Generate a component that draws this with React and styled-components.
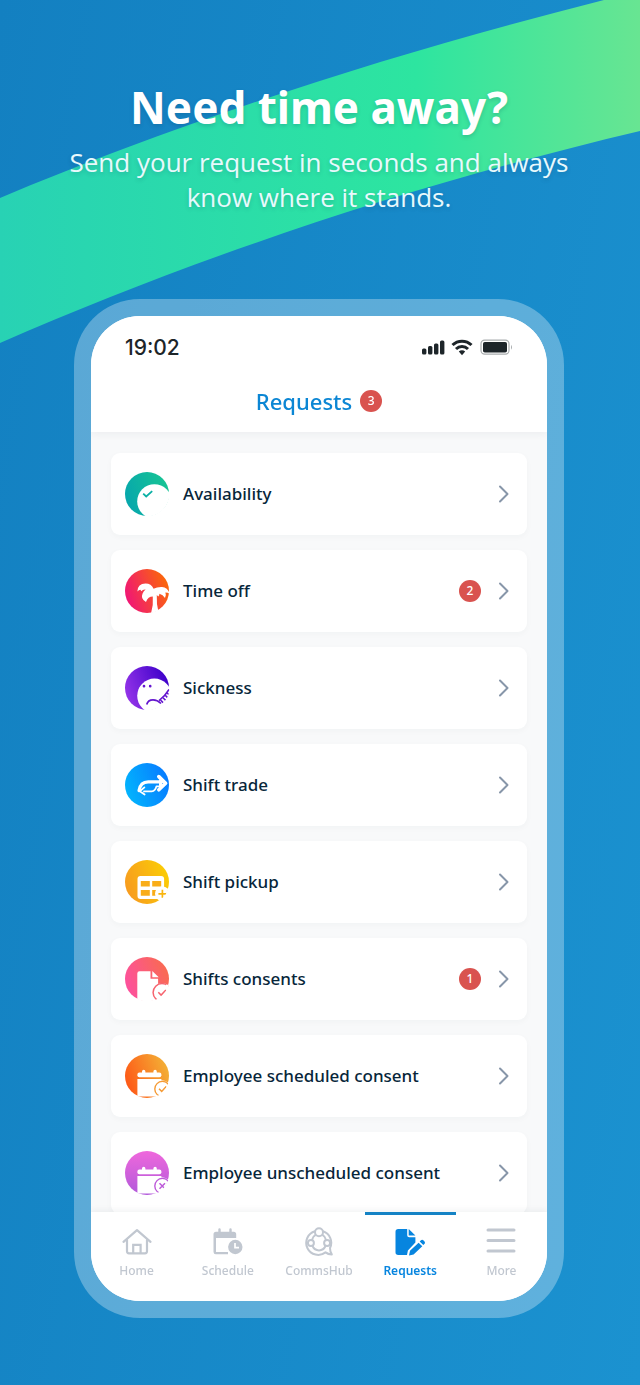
import styled, { createGlobalStyle, css } from "styled-components";

const requests = [
  { title: "Availability", Icon: AvailabilityIcon },
  { title: "Time off", Icon: TimeOffIcon, count: 2 },
  { title: "Sickness", Icon: SicknessIcon },
  { title: "Shift trade", Icon: TradeIcon },
  { title: "Shift pickup", Icon: PickupIcon },
  { title: "Shifts consents", Icon: ConsentsIcon, count: 1 },
  { title: "Employee scheduled consent", Icon: ScheduledIcon },
  { title: "Employee unscheduled consent", Icon: UnscheduledIcon },
];

const tabs = [
  { title: "Home", Icon: HomeIcon },
  { title: "Schedule", Icon: ScheduleIcon },
  { title: "CommsHub", Icon: CommsIcon },
  { title: "Requests", Icon: RequestsIcon, active: true },
  { title: "More", Icon: MoreIcon },
];

function App() {
  return (
    <Page>
      <GlobalStyle />
      <Ribbon viewBox="0 0 640 345" preserveAspectRatio="none" aria-hidden="true">
        <defs>
          <linearGradient id="ribbon" x1="0" x2="1">
            <stop offset="0" stopColor="#28d2b4" />
            <stop offset="0.65" stopColor="#2de5a0" />
            <stop offset="1" stopColor="#68e592" />
          </linearGradient>
        </defs>
        <path
          d="M0 198C180 122 390 54 604 0H640V131C400 188 190 260 0 343Z"
          fill="url(#ribbon)"
        />
      </Ribbon>

      <Intro>
        <Headline>Need time away?</Headline>
        <Tagline>Send your request in seconds and always know where it stands.</Tagline>
      </Intro>

      <Phone>
        <Screen>
          <StatusBar>
            <Clock>19:02</Clock>
            <StatusIcons />
          </StatusBar>
          <Header>
            <ScreenTitle>Requests</ScreenTitle>
            <Badge>3</Badge>
          </Header>
          <List>
            {requests.map(({ title, Icon, count }) => (
              <li key={title}>
                <Card type="button">
                  <Icon />
                  <CardTitle>{title}</CardTitle>
                  {count && <Badge>{count}</Badge>}
                  <Chevron />
                </Card>
              </li>
            ))}
          </List>
          <TabBar>
            {tabs.map(({ title, Icon, active }) => (
              <Tab key={title} href="#" $active={active}>
                <Icon />
                {title}
              </Tab>
            ))}
          </TabBar>
        </Screen>
      </Phone>
    </Page>
  );
}

function StatusIcons() {
  return (
    <svg width="92" height="18" viewBox="0 0 92 18" fill="#1d2529" aria-hidden="true">
      <rect x="1" y="10.5" width="4.4" height="6" rx="1.5" />
      <rect x="7" y="8" width="4.4" height="8.5" rx="1.5" />
      <rect x="13" y="5.5" width="4.4" height="11" rx="1.5" />
      <rect x="19" y="2.5" width="4.4" height="14" rx="1.5" />
      <g fill="none" stroke="#1d2529" strokeWidth="3">
        <path d="M31.5 7a13.6 13.6 0 0 1 19 0" />
        <path d="M35 11a8.6 8.6 0 0 1 12 0" />
      </g>
      <path d="M37.8 13.6a4.6 4.6 0 0 1 6.4 0L41 17.2z" />
      <rect x="60" y="2.2" width="28" height="14" rx="3.6" fill="none" stroke="#a9adaf" strokeWidth="1.2" />
      <rect x="62" y="4" width="24" height="10.5" rx="1.8" />
      <path d="M90 6.7q2 2.5 0 5z" fill="#a9adaf" />
    </svg>
  );
}

function Chevron() {
  return (
    <ChevronSvg viewBox="0 0 12 20" aria-hidden="true">
      <path d="M2 2.5L9.5 10 2 17.5" />
    </ChevronSvg>
  );
}

function Disc({ id, from, to, vertical, children }) {
  return (
    <DiscSvg viewBox="0 0 44 44" aria-hidden="true">
      <defs>
        <linearGradient id={id} gradientUnits="userSpaceOnUse" x1="0" y1={vertical ? 0 : 30} x2={vertical ? 0 : 44} y2={vertical ? 44 : 14}>
          <stop stopColor={from} />
          <stop offset="1" stopColor={to} />
        </linearGradient>
        <clipPath id={`${id}-clip`}>
          <circle cx="22" cy="22" r="22.5" />
        </clipPath>
      </defs>
      <circle cx="22" cy="22" r="22" fill={`url(#${id})`} />
      <g clipPath={`url(#${id}-clip)`}>{children}</g>
    </DiscSvg>
  );
}

function AvailabilityIcon() {
  return (
    <Disc id="availability" from="#06a6ad" to="#17c494">
      <circle cx="29.4" cy="29.4" r="17.2" fill="#fff" />
      <path d="M18.2 21.6l3 2.9 6-5.4" fill="none" stroke="#0bb0a5" strokeWidth="1.8" />
    </Disc>
  );
}

function TimeOffIcon() {
  return (
    <Disc id="timeoff" from="#f01379" to="#fb6a06">
      <path
        d="M26 44.5Q28.6 36 27.8 27.6Q23 27.6 21 33Q15.2 29.6 17.6 24.4Q18.6 22.2 20.6 20.6Q17.6 20.4 16.4 22.2L15.4 20.8Q13.8 21 12.4 22.4Q12.8 14.6 20.5 14.6Q26.3 14.6 28.6 19.8Q32 17.8 37 18Q42.6 18.4 44.6 24.5Q42.8 23.4 40.4 23.4Q41.6 26.2 40 29Q38 25.6 34.4 24.8Q34.6 26.6 33.2 27.4L31.8 26Q31.2 35.5 33.8 44.5Z"
        fill="#fff"
      />
    </Disc>
  );
}

function SicknessIcon() {
  return (
    <Disc id="sickness" from="#9635e9" to="#3c00c9">
      <circle cx="29.4" cy="29.8" r="17.2" fill="#fff" />
      <path d="M44 23.5L34.5 36.5 39 44H46z" fill="#fff" />
      <g fill="none" stroke="#6416cf">
        <circle cx="19" cy="20.2" r="0.7" strokeWidth="1.3" />
        <circle cx="25.2" cy="20.2" r="0.7" strokeWidth="1.3" />
        <path d="M21.7 38.5q1.3-4.5 6.3-4.6 4.3 0 8 3.6" strokeWidth="1.7" />
        <path d="M34 34.6q5.8-4.2 10-11.1" strokeWidth="1.5" />
        <path d="M35.5 34l2.5 2.6M38 31.7l2.5 2.6M40.2 29.2l2.4 2.4M42 26.7l2.2 2.2" strokeWidth="1.6" />
      </g>
    </Disc>
  );
}

function TradeIcon() {
  return (
    <Disc id="trade" from="#02b5fd" to="#087bff">
      <g fill="none" stroke="#fff" strokeLinecap="round" strokeLinejoin="round">
        <path d="M14 27.6Q15.4 18.8 23.2 18.8H37" strokeWidth="3.2" />
        <path d="M33.8 13.6L40.6 20.2 33.8 26.8" strokeWidth="3.6" />
        <path d="M14.8 28.2L19.4 24.4M14.8 28.2L19.6 31.6M19 28.4H26.6Q30.4 28 31.4 23.4H35" strokeWidth="1.8" />
      </g>
      <path d="M34 16.5h3v7h-3z" fill="#fff" />
    </Disc>
  );
}

function PickupIcon() {
  return (
    <Disc id="pickup" from="#f79a20" to="#fbcd05">
      <path d="M15.5 16h20.6a3 3 0 0 1 3 3v20H15.5a3 3 0 0 1-3-3V19a3 3 0 0 1 3-3z" fill="#fff" />
      <path d="M15.8 21h9v5.4h-9zM27.2 21h9v5.4h-9zM15.8 30h9v5.8h-9zM27.2 30h5v5.8h-5z" fill="#f9ad19" />
      <circle cx="37.4" cy="33.8" r="7.4" fill="#fff" />
      <path d="M37.4 29.8v8M33.4 33.8h8" stroke="#f9b50f" strokeWidth="1.7" />
    </Disc>
  );
}

function ConsentsIcon() {
  return (
    <Disc id="consents" from="#fd509f" to="#f96b50">
      <path d="M14.5 14.2h11v7.6h7.6v22.2H12.3V16.4a2.2 2.2 0 0 1 2.2-2.2z" fill="#fff" />
      <path d="M27.3 14l6.4 6.3h-6.4z" fill="#fff" />
      <circle cx="37" cy="35.5" r="9.6" fill="#fff" />
      <circle cx="37" cy="35.5" r="8.9" fill="none" stroke="#f6636e" strokeWidth="1.5" />
      <path d="M41 27.5l6 1v18H32l9-5z" fill="#fff" />
      <path d="M33.3 35.3l2.8 2.8 4.8-5" fill="none" stroke="#f6636e" strokeWidth="1.5" />
    </Disc>
  );
}

function CalendarShape({ color }) {
  return (
    <>
      <rect x="12.4" y="18.6" width="24" height="4.6" rx="2" fill="#fff" />
      <path d="M17 17.4a1.7 1.7 0 0 1 3.4 0v2H17zM28.4 17.4a1.7 1.7 0 0 1 3.4 0v2h-3.4z" fill="#fff" />
      <path d="M12.4 25h24v17.6h-24z" fill="#fff" />
      <circle cx="37" cy="35" r="8.8" fill="#fff" />
      <circle cx="37.4" cy="35" r="7.6" fill="none" stroke={color} strokeWidth="1.4" />
    </>
  );
}

function ScheduledIcon() {
  return (
    <Disc id="scheduled" from="#fe5616" to="#f3b136">
      <CalendarShape color="#f59b36" />
      <path d="M34 34.8l2.7 2.6 4.5-4.8" fill="none" stroke="#f59b36" strokeWidth="1.5" />
    </Disc>
  );
}

function UnscheduledIcon() {
  return (
    <Disc id="unscheduled" from="#ef68dc" to="#b159da" vertical>
      <CalendarShape color="#bd5bd9" />
      <path d="M34.5 32.3l5.5 5.5M40 32.3l-5.5 5.5" fill="none" stroke="#bd5bd9" strokeWidth="1.5" />
    </Disc>
  );
}

function HomeIcon() {
  return (
    <TabSvg viewBox="0 0 30 30">
      <g fill="none" stroke="currentColor" strokeWidth="2.2" strokeLinecap="round" strokeLinejoin="round">
        <path d="M1.5 14.8L15 3.2l13.5 11.6" />
        <path d="M5 13v11.3a2 2 0 0 0 2 2h16a2 2 0 0 0 2-2V13" />
        <path d="M11.2 26v-8.2h7.4V26" strokeLinejoin="miter" />
      </g>
    </TabSvg>
  );
}

function ScheduleIcon() {
  return (
    <TabSvg viewBox="0 0 30 30">
      <path d="M5.3 2.5a1.2 1.2 0 0 1 2.4 0v2.3h8.6V2.5a1.2 1.2 0 0 1 2.4 0v2.3h2a2.5 2.5 0 0 1 2.5 2.5V11H3v14h12v2.2H2.8A2.3 2.3 0 0 1 .5 25V7.3A2.5 2.5 0 0 1 3 4.8h2.3z" fill="currentColor" />
      <circle cx="22.3" cy="20" r="7.2" fill="currentColor" />
      <path d="M22 16v4.6h4" fill="none" stroke="#fff" strokeWidth="1.7" />
    </TabSvg>
  );
}

function CommsIcon() {
  return (
    <TabSvg viewBox="0 0 30 30">
      <g fill="none" stroke="currentColor" strokeWidth="2">
        <path d="M11 4.3A12 12 0 1 0 21.5 25.4Q24 27.4 27.8 27.4Q26 25 26 21A12 12 0 0 0 19 4.3" strokeLinejoin="round" />
        <circle cx="15" cy="5.2" r="4" />
        <circle cx="6.9" cy="16" r="3" />
        <circle cx="23.1" cy="16" r="3" />
        <path d="M11.6 7.9Q8.6 9.6 8 13M18.4 7.9q3 1.7 3.6 5.1M8.3 18.8q2.2 4.6 6.7 4.6t6.7-4.6" />
      </g>
    </TabSvg>
  );
}

function RequestsIcon() {
  return (
    <TabSvg viewBox="0 0 30 30">
      <path d="M3.2 2h9v6.2a2 2 0 0 0 2 2h6.2v5.3l-7.5 8-.9 4.5H3.2A2.7 2.7 0 0 1 .5 25.3V4.7A2.7 2.7 0 0 1 3.2 2z" fill="currentColor" />
      <path d="M13.7 2l6.7 6.6h-6.7z" fill="currentColor" />
      <path d="M23.6 15.7l3.7 3.5-8.7 8.3-4.6 1 1-4.8zM24.7 14.6l1-1a2 2 0 0 1 2.9 0l.7.7a2 2 0 0 1 0 2.8l-1 1z" fill="currentColor" />
    </TabSvg>
  );
}

function MoreIcon() {
  return (
    <TabSvg viewBox="0 0 30 30">
      <path d="M2 3h26M2 13.5h26M2 24h26" stroke="currentColor" strokeWidth="3" strokeLinecap="round" />
    </TabSvg>
  );
}

const GlobalStyle = createGlobalStyle`
  *, *::before, *::after {
    box-sizing: border-box;
  }

  body {
    margin: 0;
    font-family: "Noto Sans", "Open Sans", sans-serif;
  }

  h1, h2, p, ul {
    margin: 0;
    padding: 0;
  }
`;

const Page = styled.main`
  position: relative;
  height: 100vh;
  padding: 79px 76px 67px 74px;
  display: flex;
  flex-direction: column;
  background: linear-gradient(100deg, #1380c1, #1b92d0);
  overflow: hidden;
`;

const Ribbon = styled.svg`
  position: absolute;
  top: 0;
  left: 0;
  width: 100%;
  height: 345px;
`;

const Intro = styled.header`
  position: relative;
  height: 220px;
  margin: 0 -16px;
  text-align: center;
  color: #fff;
  text-shadow: 0 2px 4px rgba(0, 60, 90, 0.2);
`;

const Headline = styled.h1`
  font-size: 44px;
  line-height: 56px;
  font-weight: 700;
`;

const Tagline = styled.p`
  margin-top: 10px;
  font-family: "Open Sans", "Noto Sans", sans-serif;
  font-size: 26px;
  line-height: 35px;
  color: #e8f9fc;
`;

const Phone = styled.section`
  position: relative;
  flex: 1;
  min-height: 0;
  padding: 17px;
  display: flex;
  border-radius: 66px;
  background: rgba(255, 255, 255, 0.3);
`;

const Screen = styled.div`
  flex: 1;
  min-width: 0;
  display: flex;
  flex-direction: column;
  border-radius: 49px;
  background: #fff;
  overflow: hidden;
`;

const StatusBar = styled.div`
  position: relative;
  z-index: 1;
  display: flex;
  align-items: center;
  justify-content: space-between;
  height: 62px;
  padding: 0 34px;
  background: #fff;
`;

const Clock = styled.span`
  font-family: Inter, sans-serif;
  font-size: 21px;
  font-weight: 500;
  color: #1d2529;
`;

const Header = styled.div`
  position: relative;
  display: flex;
  align-items: center;
  justify-content: center;
  gap: 8px;
  height: 54px;
  padding-bottom: 8px;
  box-shadow: 0 2px 8px rgba(30, 50, 70, 0.06);
`;

const ScreenTitle = styled.h2`
  font-size: 22px;
  line-height: 30px;
  font-weight: 500;
  color: #0b86d4;
`;

const Badge = styled.span`
  flex-shrink: 0;
  width: 22px;
  height: 22px;
  border-radius: 50%;
  background: #d9534f;
  color: #fff;
  font-size: 12px;
  line-height: 22px;
  font-weight: 500;
  text-align: center;
`;

const List = styled.ul`
  flex: 1;
  min-height: 0;
  padding: 21px 20px;
  display: flex;
  flex-direction: column;
  gap: 15px;
  list-style: none;
  background: #f8f9fa;
  overflow-y: auto;
  scrollbar-width: none;
`;

const Card = styled.button`
  display: flex;
  align-items: center;
  width: 100%;
  height: 82px;
  padding: 0 17px 0 14px;
  border: 0;
  border-radius: 9px;
  background: #fff;
  box-shadow: 0 2px 6px rgba(30, 50, 70, 0.03);
  font-family: inherit;
  text-align: left;
  cursor: pointer;
`;

const CardTitle = styled.span`
  flex: 1;
  margin-left: 14px;
  font-size: 17px;
  line-height: 24px;
  font-weight: 500;
  color: #07263a;
`;

const DiscSvg = styled.svg`
  flex-shrink: 0;
  width: 44px;
  height: 44px;
  overflow: visible;
`;

const ChevronSvg = styled.svg`
  width: 12px;
  height: 20px;
  margin-left: 17px;
  fill: none;
  stroke: #8796a9;
  stroke-width: 2;
  stroke-linecap: round;
  stroke-linejoin: round;
`;

const TabBar = styled.nav`
  position: relative;
  display: flex;
  height: 89px;
  background: #fff;
  box-shadow: 0 -2px 6px rgba(30, 50, 70, 0.06);
`;

const Tab = styled.a`
  flex: 1;
  display: flex;
  flex-direction: column;
  align-items: center;
  gap: 6px;
  padding-top: 12px;
  border-top: 3px solid transparent;
  font-size: 12px;
  line-height: 16px;
  font-weight: 500;
  color: #c1c7d0;
  text-decoration: none;

  ${({ $active }) =>
    $active &&
    css`
      border-color: #1583c5;
      color: #0785df;
      font-weight: 600;
    `}
`;

const TabSvg = styled.svg`
  width: 30px;
  height: 30px;
`;

export default App;
